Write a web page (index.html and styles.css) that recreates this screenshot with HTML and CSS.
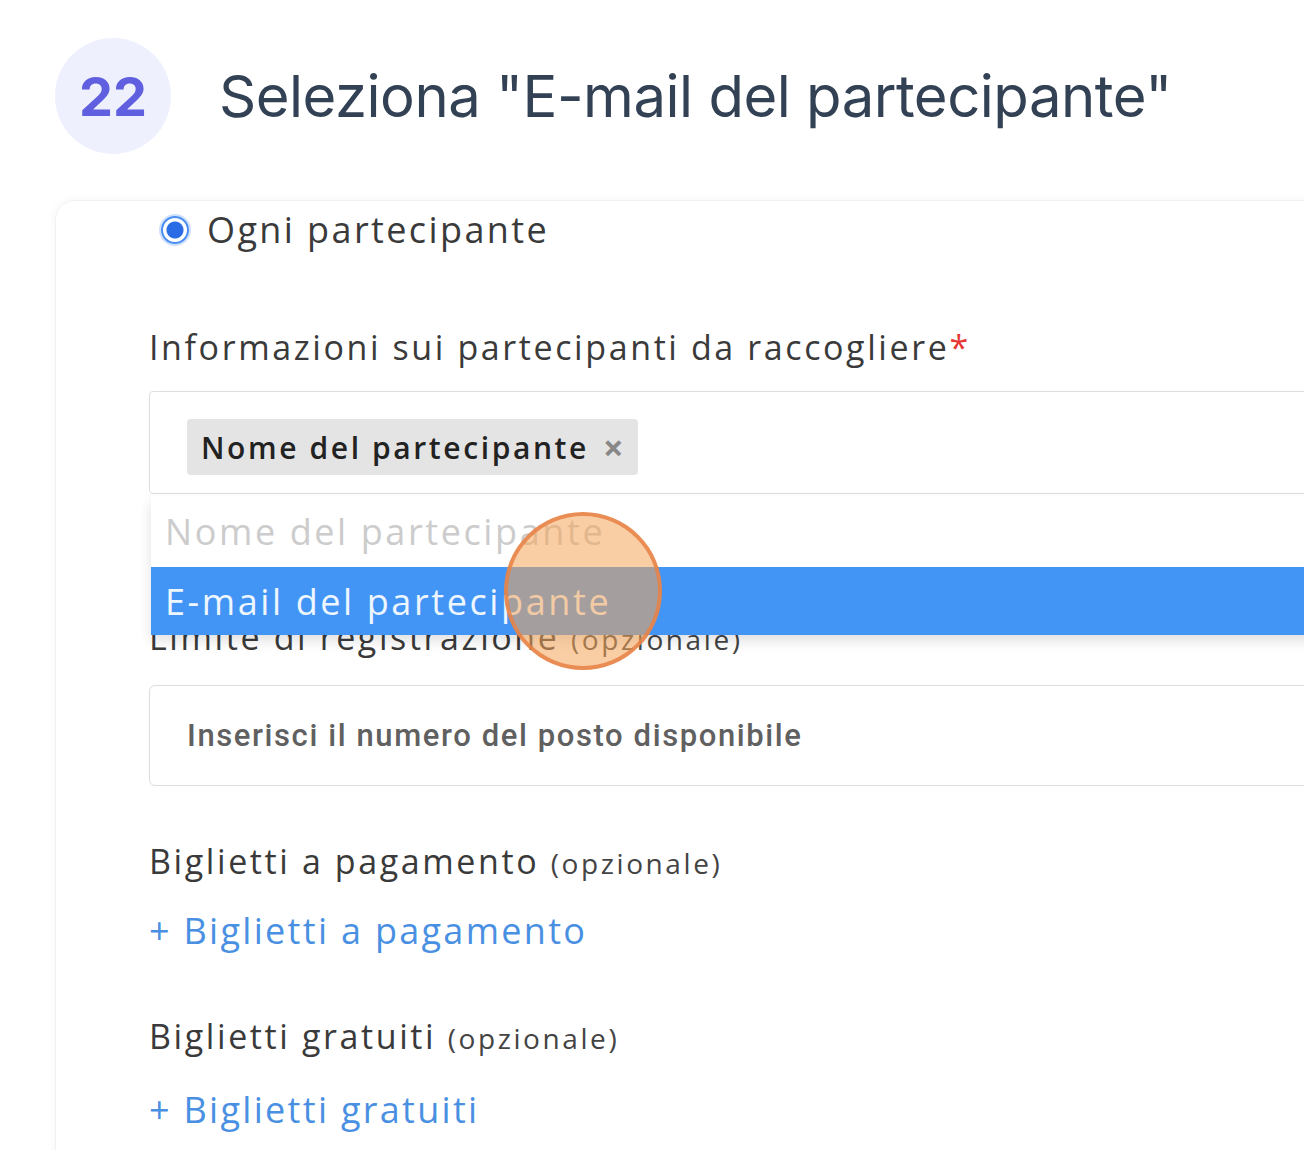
FILE: index.html
```html
<!DOCTYPE html>
<html lang="it">
<head>
    <meta charset="UTF-8">
    <meta name="viewport" content="width=device-width, initial-scale=1.0">
    <title>Passo 22</title>
    <link rel="stylesheet" href="styles.css">
</head>
<body>
    <header class="step">
        <div class="step-num">22</div>
        <h1 class="step-title">Seleziona "E-mail del partecipante"</h1>
    </header>

    <div class="card">
        <label class="radio-row">
            <span class="radio"></span>
            Ogni partecipante
        </label>

        <div class="field-label">Informazioni sui partecipanti da raccogliere<span class="req">*</span></div>
        <div class="multi-select">
            <span class="tag">Nome del partecipante <span class="tag-x">&times;</span></span>
            <ul class="dropdown">
                <li class="option disabled">Nome del partecipante</li>
                <li class="option active">E-mail del partecipante</li>
            </ul>
        </div>

        <div class="field-label limit">Limite di registrazione <small>(opzionale)</small></div>
        <div class="text-input">Inserisci il numero del posto disponibile</div>

        <div class="field-label tickets">Biglietti a pagamento <small>(opzionale)</small></div>
        <a class="add-link">+ Biglietti a pagamento</a>

        <div class="field-label tickets">Biglietti gratuiti <small>(opzionale)</small></div>
        <a class="add-link last">+ Biglietti gratuiti</a>
    </div>

    <div class="click-marker"></div>
</body>
</html>
```

FILE: styles.css
```css
html, body {
    overflow: hidden;
}

body {
    margin: 0;
    padding: 0;
    width: 1304px;
    height: 1150px;
    background: #ffffff;
    font-family: 'Open Sans', 'Noto Sans', sans-serif;
    position: relative;
}

.step {
    display: flex;
    align-items: center;
    gap: 48px;
    padding: 38px 0 0 55px;
}

.step-num {
    width: 116px;
    height: 116px;
    border-radius: 50%;
    background-color: #eef0fd;
    color: #5f5fdf;
    font-family: 'Inter', sans-serif;
    font-weight: 700;
    font-size: 54px;
    display: flex;
    justify-content: center;
    align-items: center;
}

.step-title {
    margin: 0;
    font-family: 'Inter', sans-serif;
    font-weight: 400;
    font-size: 58px;
    color: #334155;
    letter-spacing: -0.5px;
}

.card {
    margin: 46px 0 0 55px;
    width: 1400px;
    height: 1000px;
    padding: 6px 0 0 93px;
    border: 1px solid #f1f1f1;
    border-radius: 20px;
    box-shadow: 0 0 10px rgba(0, 0, 0, 0.05);
    box-sizing: border-box;
    color: #3a3a3a;
    letter-spacing: 2.6px;
}

.radio-row {
    display: flex;
    align-items: center;
    gap: 18px;
    margin-left: 12px;
    font-size: 36px;
    line-height: 46px;
    color: #3a3a3a;
    letter-spacing: 2.4px;
}

.radio {
    width: 24px;
    height: 24px;
    border-radius: 50%;
    border: 2px solid #4a8df2;
    background: radial-gradient(circle, #2a6ce6 0 8px, #ffffff 9px);
    box-shadow: 0 0 0 2px #cfe0fb;
}

.field-label {
    margin-top: 72px;
    font-size: 34px;
    line-height: 44px;
    color: #3a3a3a;
    margin-bottom: 22px;
}

.field-label small {
    font-size: 28px;
    color: #444;
}

.req {
    color: #e53935;
}

.multi-select {
    position: relative;
    height: 103px;
    border: 1px solid #dedede;
    border-radius: 4px;
    padding: 27px 0 0 37px;
    box-sizing: border-box;
}

.tag {
    display: inline-flex;
    align-items: center;
    gap: 14px;
    height: 56px;
    padding: 0 12px 0 14px;
    background-color: #e4e4e4;
    border-radius: 4px;
    font-size: 30px;
    font-weight: 600;
    color: #222;
}

.tag-x {
    color: #888;
    font-weight: 700;
    font-size: 36px;
}

.dropdown {
    position: absolute;
    top: 104px;
    left: 1px;
    width: 1300px;
    margin: 0;
    padding: 0;
    list-style: none;
    background: #ffffff;
    box-shadow: 0 6px 12px rgba(0, 0, 0, 0.12);
    z-index: 2;
}

.option {
    padding: 0 0 0 14px;
    font-size: 36px;
    display: flex;
    align-items: center;
}

.option.disabled {
    height: 71px;
    color: #cccccc;
}

.option.active {
    height: 68px;
    background-color: #4295f4;
    color: #eef6ff;
}

.field-label.limit {
    margin-top: 121px;
    margin-bottom: 24px;
}

.text-input {
    height: 101px;
    border: 1px solid #dedede;
    border-radius: 6px;
    padding-left: 37px;
    display: flex;
    align-items: center;
    box-sizing: border-box;
    font-family: 'Roboto', sans-serif;
    font-weight: 500;
    font-size: 31px;
    letter-spacing: 1.6px;
    color: #606060;
}

.field-label.tickets {
    margin-top: 53px;
    margin-bottom: 24px;
}

.add-link {
    display: block;
    font-size: 36px;
    line-height: 44px;
    color: #4a90e2;
    letter-spacing: 2.3px;
}

.add-link + .field-label.tickets {
    margin-top: 61px;
}

.add-link.last {
    margin-top: 28px;
}

.click-marker {
    position: absolute;
    left: 504px;
    top: 512px;
    width: 150px;
    height: 150px;
    border-radius: 50%;
    border: 4px solid rgba(232, 130, 70, 0.85);
    background: rgba(245, 165, 90, 0.55);
    z-index: 5;
}
```
